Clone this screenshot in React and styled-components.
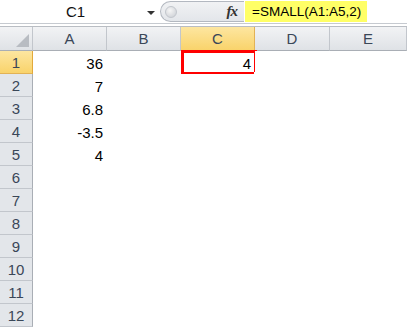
import React from "react";
import styled, { createGlobalStyle } from "styled-components";

const Global = createGlobalStyle`
  html, body { margin: 0; padding: 0; background: #fff; }
  body { font-family: "Liberation Sans", Arial, sans-serif; }
`;

const Sheet = styled.div`
  width: 407px;
  height: 328px;
  overflow: hidden;
  background: #fff;
  display: flex;
  flex-direction: column;
`;

const FormulaBar = styled.div`
  height: 23px;
  display: flex;
  align-items: stretch;
  border-bottom: 1px solid #c6cad0;
  background: #fff;
`;

const NameBox = styled.div`
  width: 160px;
  display: flex;
  align-items: center;
  font-size: 15px;
  color: #111;
`;

const NameText = styled.span`
  flex: 1;
  text-align: center;
  padding-left: 4px;
`;

const DropArrow = styled.span`
  width: 0;
  height: 0;
  border-left: 4px solid transparent;
  border-right: 4px solid transparent;
  border-top: 4px solid #333;
  margin-right: 5px;
  margin-top: 2px;
`;

const Pill = styled.div`
  width: 84px;
  margin: 1px 0;
  border: 1px solid #b3b8c0;
  border-right: none;
  border-radius: 11px 0 0 11px;
  background: linear-gradient(#f1f2f4, #e3e6ea);
  display: flex;
  align-items: center;
  justify-content: space-between;
  padding: 0 7px 0 4px;
  box-sizing: border-box;
`;

const Knob = styled.span`
  width: 10px;
  height: 10px;
  border-radius: 50%;
  background: radial-gradient(circle at 40% 35%, #f6f6f6, #c8ccd2);
  border: 1px solid #c2c6cc;
`;

const Fx = styled.span`
  font-family: "Liberation Serif", "Times New Roman", serif;
  font-style: italic;
  font-weight: bold;
  font-size: 15px;
  color: #333;
  letter-spacing: -1px;
`;

const FormulaInput = styled.div`
  flex: 1;
  display: flex;
  align-items: stretch;
  padding: 1px 0 1px 1px;
`;

const Highlight = styled.span`
  background: #ffff66;
  display: flex;
  align-items: center;
  padding: 0 6px 1px 7px;
  font-size: 13.5px;
  color: #000;
`;

const Gap = styled.div`
  height: 2px;
  border-bottom: 1px solid #b9bdc3;
`;

const Grid = styled.div`
  display: grid;
  grid-template-columns: 33px 74px 74px 74px 75px 77px;
  grid-template-rows: 24px repeat(12, 23px);
`;

const Corner = styled.div`
  background: linear-gradient(#f2f3f5, #dfe2e6);
  border-right: 1px solid #c2c6cc;
  border-bottom: 1px solid #a9aeb5;
  box-sizing: border-box;
  position: relative;
  &::after {
    content: "";
    position: absolute;
    right: 3px;
    bottom: 3px;
    width: 0;
    height: 0;
    border-left: 13px solid transparent;
    border-bottom: 13px solid #b8bcc2;
  }
`;

const ColHead = styled.div`
  box-sizing: border-box;
  display: flex;
  align-items: center;
  justify-content: center;
  font-size: 15px;
  color: #3a4758;
  border-right: 1px solid ${(p) => (p.$active ? "#e2b255" : "#c2c6cc")};
  border-bottom: 1px solid ${(p) => (p.$active ? "#e2a93b" : "#a9aeb5")};
  background: ${(p) =>
    p.$active
      ? "linear-gradient(#fde6a0, #f9d36b)"
      : "linear-gradient(#f2f3f5, #dfe2e6)"};
`;

const RowHead = styled.div`
  box-sizing: border-box;
  display: flex;
  align-items: center;
  justify-content: center;
  font-size: 15px;
  color: #3a4758;
  border-right: 1px solid ${(p) => (p.$active ? "#e2a93b" : "#a9aeb5")};
  border-bottom: 1px solid ${(p) => (p.$active ? "#e2b255" : "#c2c6cc")};
  background: ${(p) =>
    p.$active ? "linear-gradient(#fde6a0, #f9d36b)" : "#e3e6ea"};
`;

const Cell = styled.div`
  position: relative;
  display: flex;
  align-items: flex-end;
  justify-content: flex-end;
  padding: 0 4px 3px 0;
  font-size: 15px;
  line-height: 1;
  color: #000;
  background: #fff;
`;

const Selection = styled.div`
  position: absolute;
  left: 0;
  top: -1px;
  right: -2px;
  bottom: -1px;
  border: 3px solid #ff0000;
  pointer-events: none;
  &::after {
    content: "";
    position: absolute;
    right: -5px;
    bottom: -5px;
    width: 4px;
    height: 4px;
    background: #000;
    border-left: 1px solid #fff;
    border-top: 1px solid #fff;
  }
`;

const cols = ["A", "B", "C", "D", "E"];
const data = { A: ["36", "7", "6.8", "-3.5", "4"], C: ["4"] };

export default function App() {
  const rows = Array.from({ length: 12 }, (_, i) => i + 1);
  return (
    <Sheet>
      <Global />
      <FormulaBar>
        <NameBox>
          <NameText>C1</NameText>
          <DropArrow />
        </NameBox>
        <Pill>
          <Knob />
          <Fx>fx</Fx>
        </Pill>
        <FormulaInput>
          <Highlight>=SMALL(A1:A5,2)</Highlight>
        </FormulaInput>
      </FormulaBar>
      <Gap />
      <Grid>
        <Corner />
        {cols.map((c) => (
          <ColHead key={c} $active={c === "C"}>
            {c}
          </ColHead>
        ))}
        {rows.map((r) => (
          <React.Fragment key={r}>
            <RowHead $active={r === 1}>{r}</RowHead>
            {cols.map((c) => {
              const v = data[c] ? data[c][r - 1] : undefined;
              const selected = c === "C" && r === 1;
              return (
                <Cell key={c}>
                  {selected && <Selection />}
                  {v}
                </Cell>
              );
            })}
          </React.Fragment>
        ))}
      </Grid>
    </Sheet>
  );
}
